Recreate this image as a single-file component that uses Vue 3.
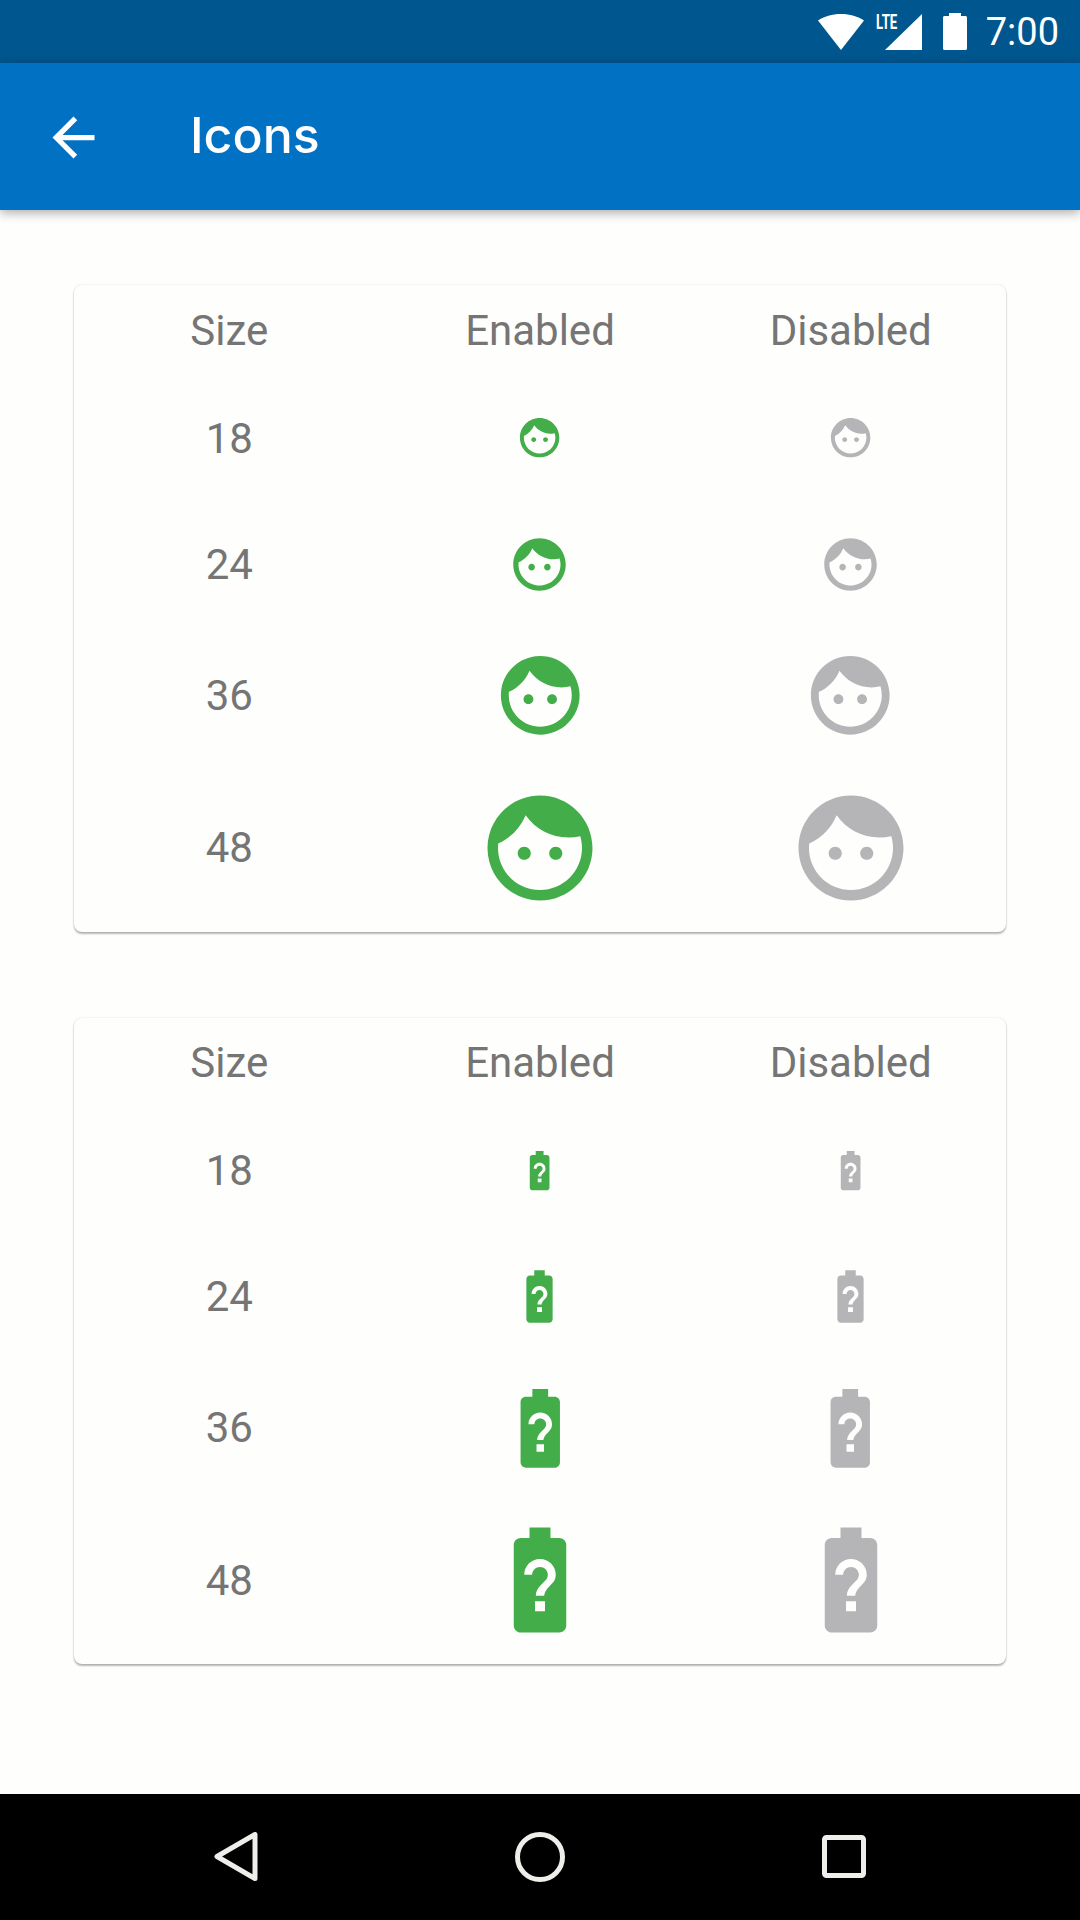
<template>
  <div class="screen">
    <div class="status-bar">
      <svg class="wifi" viewBox="0 0 46 36">
        <path d="M23 36 0 6.500C6 2.500 14 0 23 0s17 2.500 23 6.500z" fill="#fff" />
      </svg>
      <div class="signal">
        <span class="lte">LTE</span>
        <svg viewBox="0 0 37 36" class="bars"><path d="M37 0v36H0z" fill="#fff" /></svg>
      </div>
      <svg class="battery" viewBox="0 0 24 37">
        <path d="M6 0h12v3h4.500c.8 0 1.500.7 1.500 1.500V35.500c0 .8-.7 1.500-1.500 1.500H1.500C.7 37 0 36.300 0 35.500V4.500C0 3.700.7 3 1.500 3H6z" fill="#fff" />
      </svg>
      <span class="clock">7:00</span>
    </div>

    <header class="toolbar">
      <svg class="back" viewBox="0 0 24 24">
        <path d="M20 11H7.830l5.590-5.590L12 4l-8 8 8 8 1.410-1.410L7.830 13H20v-2z" fill="#fff" />
      </svg>
      <h1 class="title">Icons</h1>
    </header>

    <main class="content">
      <section v-for="table in tables" :key="table.name" class="card">
        <div class="row head">
          <div>Size</div>
          <div>Enabled</div>
          <div>Disabled</div>
        </div>
        <div v-for="size in sizes" :key="size" class="row">
          <div>{{ size }}</div>
          <div v-for="state in states" :key="state" class="cell">
            <svg
              :class="state"
              :style="{ width: size * 2.625 + 'px', height: size * 2.625 + 'px' }"
              viewBox="0 0 24 24"
            >
              <path :d="table.path" fill="currentColor" />
            </svg>
          </div>
        </div>
      </section>
    </main>

    <nav class="nav-bar">
      <svg class="nav-icon" viewBox="0 0 50 50">
        <path d="M44 2.500v44L6 24.500z" fill="none" stroke="#eeeeea" stroke-width="5" stroke-linejoin="round" />
      </svg>
      <svg class="nav-icon" viewBox="0 0 50 50">
        <circle cx="25" cy="25" r="22.500" fill="none" stroke="#eeeeea" stroke-width="5" />
      </svg>
      <svg class="nav-icon" viewBox="0 0 50 50">
        <rect x="5.500" y="5.500" width="39" height="38" rx="2" fill="none" stroke="#eeeeea" stroke-width="5" />
      </svg>
    </nav>
  </div>
</template>

<script setup>
const sizes = [18, 24, 36, 48];
const states = ["enabled", "disabled"];

const tables = [
  {
    name: "face",
    path: "M9 11.750c-.69 0-1.250.56-1.250 1.250s.56 1.250 1.250 1.250 1.250-.56 1.250-1.250-.56-1.250-1.250-1.250zm6 0c-.69 0-1.250.56-1.250 1.250s.56 1.250 1.250 1.250 1.250-.56 1.250-1.250-.56-1.250-1.250-1.250zM12 2C6.480 2 2 6.480 2 12s4.480 10 10 10 10-4.480 10-10S17.520 2 12 2zm0 18c-4.410 0-8-3.590-8-8 0-.29.02-.58.05-.86 2.360-1.050 4.230-2.980 5.210-5.370C11.070 8.330 14.050 10 17.420 10c.78 0 1.530-.09 2.250-.26.21.71.33 1.470.33 2.260 0 4.410-3.590 8-8 8z",
  },
  {
    name: "battery",
    path: "M15.670 4H14V2h-4v2H8.330C7.600 4 7 4.600 7 5.330v15.330C7 21.400 7.600 22 8.330 22h7.330c.74 0 1.340-.6 1.340-1.330V5.330C17 4.600 16.400 4 15.670 4zm-2.720 13.950h-1.900v-1.900h1.900v1.900zm1.350-5.260s-.38.42-.67.71c-.48.48-.83 1.150-.83 1.600h-1.600c0-.83.46-1.520.93-2l.93-.94c.27-.27.44-.65.44-1.060 0-.83-.67-1.500-1.500-1.500s-1.500.67-1.500 1.500H9c0-1.660 1.340-3 3-3s3 1.340 3 3c0 .66-.27 1.260-.7 1.690z",
  },
];
</script>

<style scoped>
.screen {
  width: 1080px;
  height: 1920px;
  display: flex;
  flex-direction: column;
  background: #fefefc;
  font-family: Roboto, sans-serif;
  overflow: hidden;
}

.status-bar {
  height: 63px;
  flex: none;
  display: flex;
  align-items: center;
  justify-content: flex-end;
  padding-right: 21px;
  background: #00568f;
  box-sizing: border-box;
}

.wifi {
  width: 46px;
  height: 36px;
  margin-right: 21px;
}

.signal {
  position: relative;
  width: 37px;
  height: 36px;
  margin-right: 21px;
}

.bars {
  display: block;
  width: 37px;
  height: 36px;
}

.lte {
  position: absolute;
  left: -9px;
  top: -2px;
  font-size: 20px;
  font-weight: 700;
  line-height: 20px;
  color: #fff;
  transform: scaleX(0.66);
  transform-origin: left top;
}

.battery {
  width: 24px;
  height: 37px;
  margin-right: 19px;
}

.clock {
  color: #fff;
  font-size: 38px;
}

.toolbar {
  height: 147px;
  flex: none;
  display: flex;
  align-items: center;
  background: #0071c3;
  box-shadow: 0 3px 10px rgba(0, 0, 0, 0.32);
  position: relative;
}

.back {
  width: 63px;
  height: 63px;
  margin: 2px 0 0 42px;
}

.title {
  margin: 0 0 4px 85px;
  color: #fff;
  font-family: Inter, sans-serif;
  font-size: 50px;
  font-weight: 500;
}

.content {
  flex: 1;
  display: flex;
  flex-direction: column;
  gap: 86px;
  padding: 75px 74px 0;
}

.card {
  border-radius: 8px;
  background: #fefefc;
  box-shadow: 0 2px 2px rgba(0, 0, 0, 0.28), 0 0 2px rgba(0, 0, 0, 0.14);
}

.row {
  display: grid;
  grid-template-columns: repeat(3, 1fr);
  align-items: center;
  justify-items: center;
  min-height: 126px;
  padding: 21px 0;
  box-sizing: border-box;
  color: #757575;
  font-size: 42px;
}

.head {
  min-height: 0;
  height: 90px;
  padding: 0;
}

.cell {
  display: flex;
}

.enabled {
  display: block;
  color: #43ad4a;
}

.disabled {
  display: block;
  color: #b5b5b7;
}

.nav-bar {
  height: 126px;
  flex: none;
  display: flex;
  align-items: center;
  justify-content: space-between;
  padding: 0 211px;
  background: #000;
}

.nav-icon {
  width: 50px;
  height: 50px;
}
</style>
